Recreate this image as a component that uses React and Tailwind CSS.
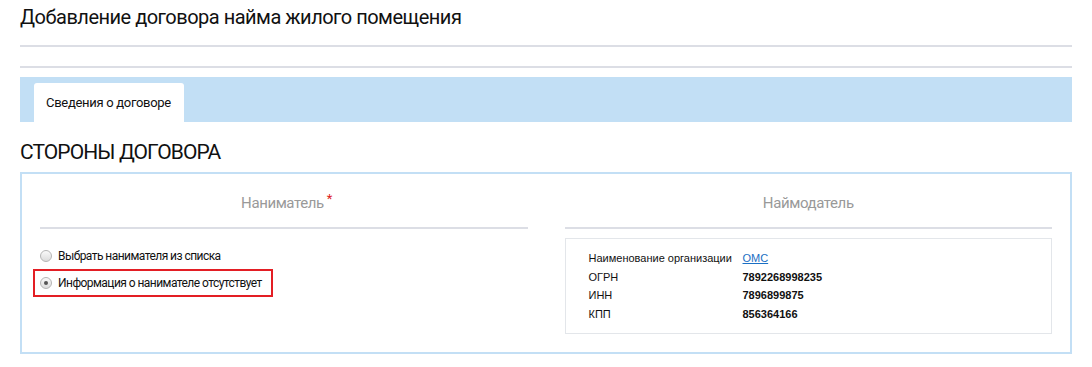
import { useState } from "react";

const cond = { fontFamily: "Roboto, 'Noto Sans', sans-serif" };

function Radio({ checked, label, onClick }) {
  return (
    <label onClick={onClick} className="flex items-center gap-[6px] cursor-pointer whitespace-nowrap">
      <span className="w-[12px] h-[12px] shrink-0 rounded-full border border-[#b5b5b5] bg-gradient-to-b from-[#fafafa] to-[#dcdcdc] flex items-center justify-center">
        {checked && <span className="w-[4px] h-[4px] rounded-full bg-[#555]" />}
      </span>
      <span className="text-[12px] leading-[16px] text-[#111] tracking-[-0.55px]">{label}</span>
    </label>
  );
}

export default function App() {
  const [choice, setChoice] = useState("none");

  const rows = [
    { label: "ОГРН", value: "7892268998235" },
    { label: "ИНН", value: "7896899875" },
    { label: "КПП", value: "856364166" },
  ];

  return (
    <div className="w-[1092px] h-[367px] bg-white px-[20px]" style={cond}>
      <h1 className="pt-[4px] h-[45px] text-[20px] text-[#111] tracking-[-0.5px] leading-[26px]">
        Добавление договора найма жилого помещения
      </h1>
      <div className="border-t-2 border-[#dcdee5] h-[21px]" />
      <div className="border-t-2 border-[#dcdee5] h-[11px]" />

      <div className="bg-[#c2dff5] h-[45px] pt-[6px] pl-[14px] flex">
        <div className="bg-white w-[150px] rounded-t-[3px] flex items-center pl-[12px] text-[13px] text-[#111] tracking-[-0.3px]">
          Сведения о договоре
        </div>
      </div>

      <h2 className="mt-[17px] h-[33px] text-[21px] leading-[26px] text-[#111] tracking-[-0.9px]">СТОРОНЫ ДОГОВОРА</h2>

      <div className="border-2 border-[#c3dff5] h-[182px] px-[18px] flex gap-[37px]">
        <div className="w-[488px]">
          <div className="h-[55px] border-b-2 border-[#dcdee5] flex items-center justify-center pt-[6px] pl-[6px]">
            <span className="text-[15px] text-[#999] tracking-[-0.4px]">Наниматель</span>
            <span className="text-[#d22] text-[13px] leading-[13px] -mt-[10px] ml-[3px]">*</span>
          </div>
          <div className="mt-[19px] flex flex-col gap-[5px]">
            <Radio checked={choice === "list"} onClick={() => setChoice("list")} label="Выбрать нанимателя из списка" />
            <div className="-ml-[7px] w-[240px] h-[28px] border-2 border-[#e31e24] pl-[5px] flex items-center">
              <Radio checked={choice === "none"} onClick={() => setChoice("none")} label="Информация о нанимателе отсутствует" />
            </div>
          </div>
        </div>

        <div className="w-[488px]">
          <div className="h-[55px] border-b-2 border-[#dcdee5] flex items-center justify-center pt-[6px]">
            <span className="text-[15px] text-[#999] tracking-[-0.4px]">Наймодатель</span>
          </div>
          <div
            className="mt-[9px] border border-[#e3e6ea] h-[96px] pl-[23px] pt-[10px] text-[11px] text-[#111] leading-[18.5px]"
            style={{ fontFamily: "'Liberation Sans', Arial, sans-serif" }}
          >
            <div className="flex">
              <span className="w-[154px]">Наименование организации</span>
              <a href="#" className="text-[#1a6fc4] underline">ОМС</a>
            </div>
            {rows.map((r) => (
              <div key={r.label} className="flex">
                <span className="w-[154px]">{r.label}</span>
                <span className="font-bold">{r.value}</span>
              </div>
            ))}
          </div>
        </div>
      </div>
    </div>
  );
}
